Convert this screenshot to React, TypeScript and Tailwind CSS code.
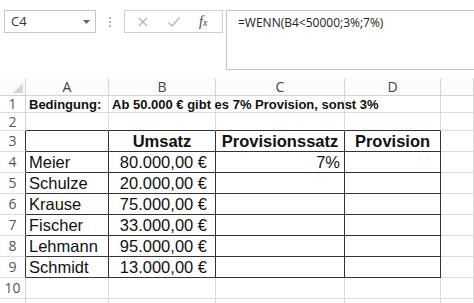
const COLS = ["A", "B", "C", "D", "E"];

type Cell = { text?: string; align?: "left" | "right" | "center"; bold?: boolean; small?: boolean; pad?: string };

const ROWS: { n: number; h: string; label?: boolean; cells: Cell[] }[] = [
  {
    n: 1,
    h: "h-[17px]",
    cells: [
      { text: "Bedingung:", bold: true, small: true },
      { text: "Ab 50.000 € gibt es 7% Provision, sonst 3%", bold: true, small: true },
      {},
      {},
      {},
    ],
  },
  { n: 2, h: "h-[18px]", cells: [{}, {}, {}, {}, {}] },
  {
    n: 3,
    h: "h-[21px]",
    cells: [{}, { text: "Umsatz", bold: true, align: "center" }, { text: "Provisionssatz", bold: true, align: "center" }, { text: "Provision", bold: true, align: "center" }, {}],
  },
  { n: 4, h: "h-[21px]", cells: [{ text: "Meier" }, { text: "80.000,00 €", align: "right" }, { text: "7%", align: "right", pad: "pr-[4px]" }, {}, {}] },
  { n: 5, h: "h-[21px]", cells: [{ text: "Schulze" }, { text: "20.000,00 €", align: "right" }, {}, {}, {}] },
  { n: 6, h: "h-[21px]", cells: [{ text: "Krause" }, { text: "75.000,00 €", align: "right" }, {}, {}, {}] },
  { n: 7, h: "h-[21px]", cells: [{ text: "Fischer" }, { text: "33.000,00 €", align: "right" }, {}, {}, {}] },
  { n: 8, h: "h-[21px]", cells: [{ text: "Lehmann" }, { text: "95.000,00 €", align: "right" }, {}, {}, {}] },
  { n: 9, h: "h-[21px]", cells: [{ text: "Schmidt" }, { text: "13.000,00 €", align: "right" }, {}, {}, {}] },
  { n: 10, h: "h-[21px]", cells: [{}, {}, {}, {}, {}] },
  { n: 11, h: "h-[21px]", label: false, cells: [{}, {}, {}, {}, {}] },
];

const WIDTHS = ["w-[83px]", "w-[107px]", "w-[129px]", "w-[96px]", "flex-1"];

function inTable(row: number, col: number) {
  return row >= 3 && row <= 9 && col <= 3;
}

function cellBorder(row: number, col: number) {
  const right = inTable(row, col) ? "border-r-[#333]" : "border-r-[#dcdcdc]";
  const bottom = inTable(row, col) || (row === 2 && col <= 3) ? "border-b-[#333]" : "border-b-[#dcdcdc]";
  return `${right} ${bottom}`;
}

function FormulaBar() {
  return (
    <div className="relative flex h-[78px] items-start bg-white font-['Open_Sans',sans-serif]">
      <div className="ml-[4px] mt-[10px] flex h-[23px] w-[92px] items-center justify-between border border-[#c6c6c6] pl-[6px] pr-[5px] text-[13px] text-[#333]">
        <span>C4</span>
        <svg width="7" height="4" viewBox="0 0 7 4">
          <path d="M0 0h7L3.5 4z" fill="#666" />
        </svg>
      </div>
      <div className="ml-[13px] mt-[17px] flex w-[2px] flex-col gap-[2px]">
        <span className="h-[2px] w-[2px] bg-[#b5b5b5]" />
        <span className="h-[2px] w-[2px] bg-[#b5b5b5]" />
        <span className="h-[2px] w-[2px] bg-[#b5b5b5]" />
      </div>
      <div className="ml-[13px] mt-[10px] flex h-[23px] w-[99px] items-center border border-[#d0d0d0] pl-[11px]">
        <svg width="12" height="12" viewBox="0 0 12 12" className="ml-[1px]">
          <path d="M2 2l8 8M10 2l-8 8" stroke="#b3b3b3" strokeWidth="1.2" />
        </svg>
        <svg width="14" height="12" viewBox="0 0 14 12" className="ml-[18px]">
          <path d="M1.5 6.5l3.5 3.5L12.5 1.5" stroke="#b3b3b3" strokeWidth="1.2" fill="none" />
        </svg>
        <span className="ml-[18px] font-['Liberation_Serif',serif] text-[14px] italic leading-none text-[#444]">
          f<span className="text-[10px]">x</span>
        </span>
      </div>
      <div className="ml-[3px] mt-[10px] h-[60px] flex-1 border-b border-l border-t border-[#c6c6c6] pl-[11px] pt-[3px] text-[12px] text-[#222]">
        =WENN(B4&lt;50000;3%;7%)
      </div>
    </div>
  );
}

export default function App() {
  return (
    <div className="h-[303px] w-[474px] overflow-hidden bg-white">
      <FormulaBar />
      <div className="flex h-[18px] border-b border-[#d4d4d4] bg-[#fbfbfb] font-['Open_Sans',sans-serif] text-[14px] text-[#444]">
        <div className="relative w-[26px] border-r border-[#d4d4d4]">
          <svg width="10" height="10" viewBox="0 0 10 10" className="absolute bottom-[2px] right-[2px]">
            <path d="M10 0V10H0z" fill="#d6d6d6" />
          </svg>
        </div>
        {COLS.map((c, i) => (
          <div key={c} className={`${WIDTHS[i]} flex items-center justify-center border-r border-[#d4d4d4] leading-none`}>
            {i < 4 ? c : ""}
          </div>
        ))}
      </div>
      {ROWS.map((r) => (
        <div key={r.n} className={`flex ${r.h}`}>
          <div
            className={`flex w-[26px] items-center justify-center border-b border-r border-b-[#dcdcdc] font-['Open_Sans',sans-serif] text-[14px] leading-none text-[#555] ${
              r.n >= 3 && r.n <= 9 ? "border-r-[#333]" : "border-r-[#d4d4d4]"
            }`}
          >
            {r.label === false ? "" : r.n}
          </div>
          {r.cells.map((c, i) => (
            <div
              key={i}
              className={`${WIDTHS[i]} flex items-center border-b border-r px-[3px] font-['Liberation_Sans',Arial,sans-serif] leading-none text-[#111] ${cellBorder(
                r.n,
                i
              )} ${c.align === "right" ? `justify-end ${c.pad ?? "pr-[8px]"}` : c.align === "center" ? "justify-center" : "justify-start"} ${
                c.bold ? "font-bold" : ""
              } ${c.small ? "text-[13px]" : "text-[16.5px]"}`}
            >
              {c.text && <span className="whitespace-nowrap">{c.text}</span>}
            </div>
          ))}
        </div>
      ))}
    </div>
  );
}
